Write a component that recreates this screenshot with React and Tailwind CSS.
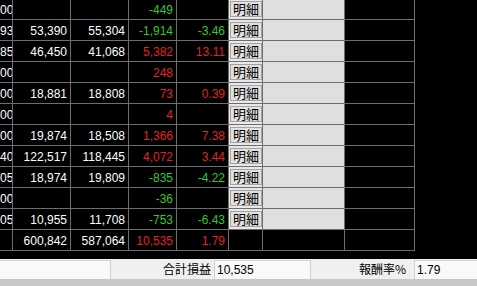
const G = 'text-[#33c833]'
const R = 'text-[#e02424]'

const rows = [
  { a: '00', b: '', c: '', d: '-449', e: '', t: G },
  { a: '93', b: '53,390', c: '55,304', d: '-1,914', e: '-3.46', t: G },
  { a: '85', b: '46,450', c: '41,068', d: '5,382', e: '13.11', t: R },
  { a: '00', b: '', c: '', d: '248', e: '', t: R },
  { a: '00', b: '18,881', c: '18,808', d: '73', e: '0.39', t: R },
  { a: '00', b: '', c: '', d: '4', e: '', t: R },
  { a: '00', b: '19,874', c: '18,508', d: '1,366', e: '7.38', t: R },
  { a: '40', b: '122,517', c: '118,445', d: '4,072', e: '3.44', t: R },
  { a: '05', b: '18,974', c: '19,809', d: '-835', e: '-4.22', t: G },
  { a: '00', b: '', c: '', d: '-36', e: '', t: G },
  { a: '05', b: '10,955', c: '11,708', d: '-753', e: '-6.43', t: G },
  { a: '', b: '600,842', c: '587,064', d: '10,535', e: '1.79', t: R, total: true },
]

const cell = 'h-[21px] border-r border-b border-[#6e6e6e] overflow-hidden whitespace-nowrap'
const num = 'text-right pr-[3px] leading-[22px]'

function Row({ r }) {
  return (
    <div className="flex">
      <div className={`${cell} ${num} w-[13px] text-white`}>{r.a}</div>
      <div className={`${cell} ${num} w-[58px] text-white`}>{r.b}</div>
      <div className={`${cell} ${num} w-[58px] text-white`}>{r.c}</div>
      <div className={`${cell} ${num} w-[48px] ${r.t}`}>{r.d}</div>
      <div className={`${cell} ${num} w-[52px] ${r.t}`}>{r.e}</div>
      {r.total ? (
        <>
          <div className={`${cell} w-[34px]`} />
          <div className={`${cell} w-[82px]`} />
        </>
      ) : (
        <>
          <div className={`${cell} w-[34px] bg-[#e8e8e8]`}>
            <button className="ml-px mt-[2px] w-[32px] h-[16px] bg-[#e1e1e1] border border-[#a3a3a3] text-[13px] leading-[14px] text-black font-['Noto_Sans_CJK_JP',sans-serif] flex items-center justify-center">
              明細
            </button>
          </div>
          <div className={`${cell} w-[82px] bg-[#dfdfdf]`} />
        </>
      )}
      <div className={`${cell} w-[70px]`} />
    </div>
  )
}

export default function App() {
  return (
    <div className="w-[477px] h-[286px] overflow-hidden bg-black flex flex-col text-[12px] font-['Liberation_Sans','Noto_Sans_CJK_JP',sans-serif]">
      <div className="h-[259px] shrink-0 overflow-hidden">
        <div className="mt-[-1px] w-[415px]">
          {rows.map((r, i) => (
            <Row key={i} r={r} />
          ))}
        </div>
      </div>

      <div className="h-[20px] shrink-0 bg-[#f0f0f0] flex overflow-hidden text-black">
        <div className="w-[111px] h-[19px] mt-px bg-[#f9f9f9] border-t border-r border-[#d0d0d0]" />
        <div className="w-[103px] text-right pr-[3px] leading-[20px] font-['Noto_Sans_CJK_JP',sans-serif]">合計損益</div>
        <div className="w-[97px] h-[19px] mt-px bg-[#f9f9f9] border-t border-l border-r border-[#d0d0d0] pl-[2px] leading-[18px]">10,535</div>
        <div className="w-[103px] text-right pr-[8px] leading-[20px] font-['Noto_Sans_CJK_JP',sans-serif]">報酬率%</div>
        <div className="flex-1 h-[19px] mt-px bg-[#f9f9f9] border-t border-l border-[#d0d0d0] pl-[2px] leading-[18px]">1.79</div>
      </div>

      <div className="flex-1 bg-[#c8c8c8]" />
    </div>
  )
}
